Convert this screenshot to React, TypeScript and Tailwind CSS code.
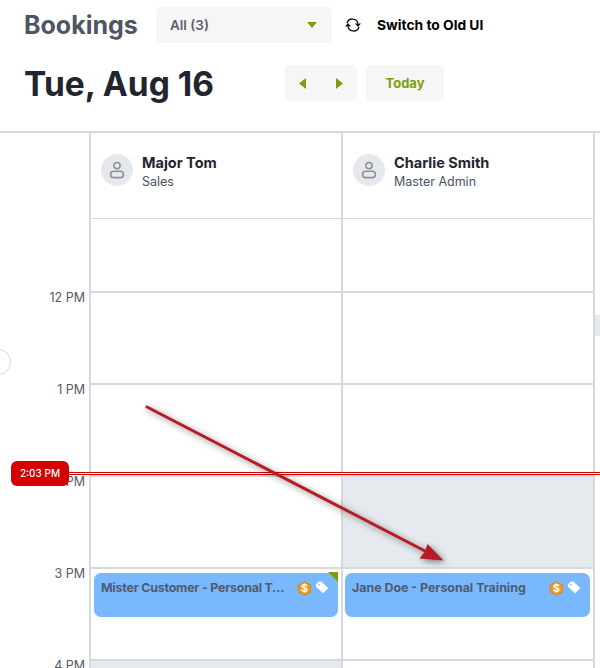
import React from "react";

function Avatar() {
  return (
    <div className="w-8 h-8 rounded-full bg-[#e7e8ec] flex items-center justify-center shrink-0">
      <svg width="20" height="20" viewBox="0 0 20 20" fill="none" stroke="#8b90a0" strokeWidth="1.6">
        <circle cx="10" cy="5.6" r="3.1" />
        <rect x="3.6" y="11.2" width="12.8" height="6.4" rx="3.2" />
      </svg>
    </div>
  );
}

function Person({ name, role }: { name: string; role: string }) {
  return (
    <div className="h-[86px] border-b border-[#d5d8df] flex pt-[21px] pl-[10px] gap-[9px] box-border">
      <Avatar />
      <div className="-mt-[1px]">
        <div className="text-[14.5px] leading-[20px] font-bold text-[#22252e]">{name}</div>
        <div className="text-[12.5px] leading-[18px] text-[#4b5162]">{role}</div>
      </div>
    </div>
  );
}

function Coin() {
  return (
    <svg width="15" height="15" viewBox="0 0 15 15" className="shrink-0">
      <path d="M7.5 1 13.5 4.2V10.8L7.5 14 1.5 10.8V4.2Z" fill="#ee9f25" stroke="#d98a2a" strokeWidth="1.4" strokeLinejoin="round" />
      <text x="7.5" y="11.3" textAnchor="middle" fontSize="10.5" fontWeight="700" fill="#fff" fontFamily="Inter, sans-serif">$</text>
    </svg>
  );
}

function Tag() {
  return (
    <svg width="14" height="13" viewBox="0 0 14 13" className="shrink-0">
      <path d="M1.2 3.6 3.8 1 6.4 1 12.8 7.2 8.2 11.8 1.8 6Z" fill="#fff" stroke="#fff" strokeWidth="1" strokeLinejoin="round" />
      <circle cx="3.9" cy="3.8" r="0.9" fill="#7ab8fe" />
    </svg>
  );
}

function Booking({ title, className, titleClass, flag }: { title: string; className: string; titleClass: string; flag?: boolean }) {
  return (
    <div className={`relative h-[44px] rounded-[7px] bg-[#7ab8fe] flex items-start pt-[7px] pl-[7px] pr-[9px] ${className}`}>
      <div className={`flex-1 min-w-0 truncate text-[12.4px] leading-[15px] font-bold text-[#4f5a6e] ${titleClass}`}>{title}</div>
      <div className="flex items-start gap-[3px] pt-[1px]">
        <Coin />
        <Tag />
      </div>
      {flag && (
        <svg width="10" height="10" viewBox="0 0 10 10" className="absolute -top-[1px] right-0">
          <path d="M0 0H10V10Z" fill="#7d9e0a" />
        </svg>
      )}
    </div>
  );
}

function Slot({ children, grey, first }: { children?: React.ReactNode; grey?: boolean; first?: boolean }) {
  return (
    <div className={`${first ? "h-[72px]" : "h-[92px] border-t-2 border-[#d5d8df]"} box-border ${grey ? "bg-[#e6e9ed]" : "bg-white"}`}>
      {children}
    </div>
  );
}

export default function App() {
  return (
    <div className="relative w-[600px] h-[668px] overflow-hidden bg-white font-['Inter',sans-serif]">
      <header className="h-[131px] pl-[24px] pt-[7px] box-border">
        <div className="flex items-center h-[36px]">
          <h1 className="w-[132px] text-[25px] font-bold text-[#4f5563] leading-none">Bookings</h1>
          <div className="w-[176px] h-[36px] rounded-[5px] bg-[#f6f6f6] flex items-center justify-between pl-[14px] pr-[15px]">
            <span className="text-[13.5px] font-semibold text-[#5a5f6e] pt-[1px]">All (3)</span>
            <svg width="10" height="6" viewBox="0 0 10 6"><path d="M0 0H10L5 6Z" fill="#7d9e0a" /></svg>
          </div>
          <svg width="16" height="14" viewBox="0 0 16 14" className="ml-[13px]" fill="none" stroke="#111" strokeWidth="1.3">
            <path d="M2 5A5.7 5.7 0 0 1 13 5.5" />
            <path d="M14 9A5.7 5.7 0 0 1 3 8.5" />
            <path d="M10 5.4H16L13 9Z" fill="#111" stroke="none" />
            <path d="M0 8.6H6L3 5Z" fill="#111" stroke="none" />
          </svg>
          <span className="ml-[16px] text-[13.8px] font-bold text-black pt-[1px]">Switch to Old UI</span>
        </div>
        <div className="flex items-center mt-[22px] h-[36px]">
          <div className="w-[261px] text-[33.5px] leading-none font-bold text-[#22252e] pt-[3px]">Tue, Aug 16</div>
          <div className="w-[72px] h-[36px] rounded-[5px] bg-[#f6f6f6] flex items-center justify-between pl-[14px] pr-[14px]">
            <svg width="7" height="11" viewBox="0 0 7 11"><path d="M7 0V11L0 5.5Z" fill="#7d9e0a" /></svg>
            <svg width="7" height="11" viewBox="0 0 7 11"><path d="M0 0V11L7 5.5Z" fill="#7d9e0a" /></svg>
          </div>
          <div className="ml-[9px] w-[78px] h-[36px] rounded-[5px] bg-[#f6f6f6] flex items-center justify-center text-[13px] font-bold text-[#7d9e0a] pt-[2px]">Today</div>
        </div>
      </header>

      <div className="flex border-t-2 border-[#d5d8df]">
        <div className="w-[89px] shrink-0 pt-[157px]">
          {["12 PM", "1 PM", "2 PM", "3 PM", "4 PM"].map((t) => (
            <div key={t} className="h-[92px] pr-[4px] text-right text-[12.5px] leading-[16px] text-[#555a66]">{t}</div>
          ))}
        </div>
        <div className="w-[252px] shrink-0 border-l-2 border-[#d5d8df] box-border">
          <Person name="Major Tom" role="Sales" />
          <Slot first />
          <Slot />
          <Slot />
          <Slot />
          <Slot>
            <div className="pt-[4px]"><Booking title="Mister Customer - Personal Training" className="ml-[3px] mr-[3px]" titleClass="tracking-[-0.2px] pr-[9px]" flag /></div>
          </Slot>
          <Slot grey />
        </div>
        <div className="w-[252px] shrink-0 border-l-2 border-[#d5d8df] box-border">
          <Person name="Charlie Smith" role="Master Admin" />
          <Slot first />
          <Slot />
          <Slot />
          <Slot grey />
          <Slot>
            <div className="pt-[4px]"><Booking title="Jane Doe - Personal Training" className="ml-[2px] mr-[3px]" titleClass="pr-[6px]" /></div>
          </Slot>
          <Slot />
        </div>
        <div className="flex-1 border-l-2 border-[#d5d8df]">
          <div className="h-[182px]" />
          <div className="h-[21px] bg-[#e6e9ed]" />
        </div>
      </div>

      <div className="absolute -left-[15px] top-[349px] w-[26px] h-[26px] rounded-full bg-white border border-[#d5d8df]" />

      <div className="absolute left-[60px] right-0 top-[472px] h-[3px] border-y border-[#d50000] bg-white" />
      <div className="absolute left-[11px] top-[461px] w-[58px] h-[25px] rounded-[6px] bg-[#d50000] flex items-center justify-center text-[10px] font-medium text-white">2:03 PM</div>

      <svg width="600" height="668" viewBox="0 0 600 668" className="absolute inset-0 pointer-events-none drop-shadow-[2px_2px_3px_rgba(0,0,0,0.5)]">
        <path d="M147 407 425 551" stroke="#b71c24" strokeWidth="3" strokeLinecap="round" fill="none" />
        <path d="M443.5 560.5 427.5 544 425 551.5 419.5 558.5Z" fill="#b71c24" />
      </svg>
    </div>
  );
}
